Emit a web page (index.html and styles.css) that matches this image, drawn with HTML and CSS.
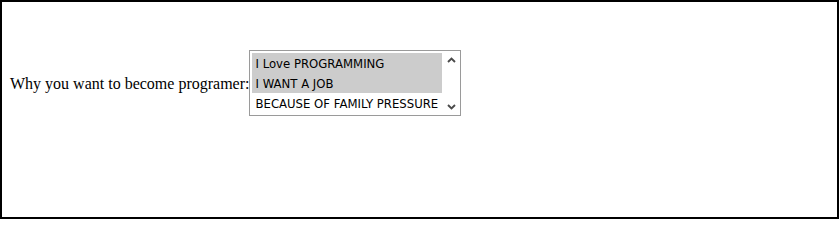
FILE: index.html
```html
<!DOCTYPE html>
<html lang="en">
<head>
<meta charset="utf-8">
<title>Programmer survey</title>
<link rel="stylesheet" href="styles.css">
</head>
<body>
<div class="frame">
  <label class="prompt">Why you want to become programer:</label>
  <div class="listbox" role="listbox" aria-multiselectable="true">
    <ul class="options">
      <li class="option selected" role="option" aria-selected="true">I Love PROGRAMMING</li>
      <li class="option selected" role="option" aria-selected="true">I WANT A JOB</li>
      <li class="option" role="option" aria-selected="false">BECAUSE OF FAMILY PRESSURE</li>
    </ul>
    <div class="scrollbar">
      <div class="arrow">
        <svg width="9" height="6" viewBox="0 0 9 6"><path d="M1 5 L4.5 1.5 L8 5" fill="none" stroke="#4a4a4a" stroke-width="1.9"/></svg>
      </div>
      <div class="track"></div>
      <div class="arrow">
        <svg width="9" height="6" viewBox="0 0 9 6"><path d="M1 1 L4.5 4.5 L8 1" fill="none" stroke="#4a4a4a" stroke-width="1.9"/></svg>
      </div>
    </div>
  </div>
</div>
</body>
</html>
```

FILE: styles.css
```css
html, body {
  margin: 0;
  padding: 0;
  background: #ffffff;
}

.frame {
  box-sizing: border-box;
  width: 839px;
  height: 219px;
  border: 2px solid #000000;
  padding: 48px 8px 0 8px;
  display: flex;
  align-items: flex-start;
  gap: 0;
}

.prompt {
  font-family: "Liberation Serif", "Times New Roman", serif;
  font-size: 16px;
  line-height: 18px;
  color: #000000;
  margin-top: 25px;
}

.listbox {
  box-sizing: border-box;
  width: 212px;
  height: 66px;
  border: 1px solid #9a9a9a;
  background: #ffffff;
  display: flex;
}

.options {
  list-style: none;
  margin: 0;
  padding: 2px 0 2px 2px;
  flex: 1;
}

.option {
  box-sizing: border-box;
  height: 20px;
  line-height: 23px;
  padding-left: 3px;
  font-family: "DejaVu Sans", Tahoma, sans-serif;
  font-size: 11.7px;
  color: #000000;
  white-space: nowrap;
  overflow: hidden;
}

.option.selected {
  background: #cccccc;
}

.scrollbar {
  width: 18px;
  display: flex;
  flex-direction: column;
  background: #ffffff;
}

.arrow {
  height: 17px;
  display: flex;
  align-items: center;
  justify-content: center;
}

.track {
  flex: 1;
}
```
